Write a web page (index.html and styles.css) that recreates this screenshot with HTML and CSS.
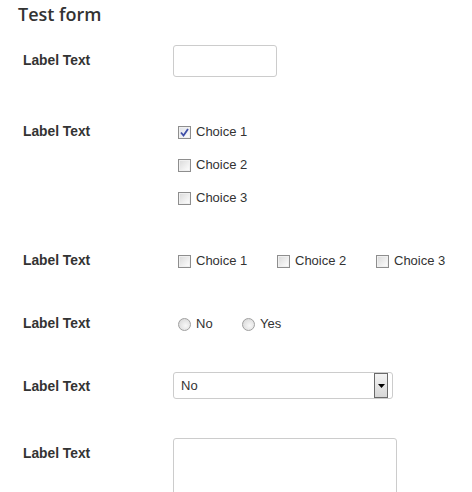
FILE: index.html
```html
<!DOCTYPE html>
<html>
<head>
<meta charset="utf-8">
<link rel="stylesheet" href="styles.css">
</head>
<body>
<h1 class="title">Test form</h1>
<div class="form">
  <div class="row row-input">
    <div class="label">Label Text</div>
    <div class="control"><div class="textbox"></div></div>
  </div>
  <div class="row row-checks">
    <div class="label">Label Text</div>
    <div class="control vlist">
      <div class="choice"><span class="cb checked"><svg width="9" height="9" viewBox="0 0 9 9"><path d="M1 4.5 L3.5 7.5 L8 1" fill="none" stroke="#3f4fa8" stroke-width="1.8"/></svg></span>Choice 1</div>
      <div class="choice"><span class="cb"></span>Choice 2</div>
      <div class="choice"><span class="cb"></span>Choice 3</div>
    </div>
  </div>
  <div class="row row-hchecks">
    <div class="label">Label Text</div>
    <div class="control hlist">
      <div class="choice hc"><span class="cb"></span>Choice 1</div>
      <div class="choice hc"><span class="cb"></span>Choice 2</div>
      <div class="choice hc"><span class="cb"></span>Choice 3</div>
    </div>
  </div>
  <div class="row row-radio">
    <div class="label">Label Text</div>
    <div class="control hlist">
      <div class="choice rc"><span class="rb"></span>No</div>
      <div class="choice rc"><span class="rb"></span>Yes</div>
    </div>
  </div>
  <div class="row row-select">
    <div class="label">Label Text</div>
    <div class="control">
      <div class="select"><span class="sel-text">No</span><span class="sel-btn"><svg width="7" height="4" viewBox="0 0 7 4"><path d="M0 0 H7 L3.5 4 Z" fill="#000"/></svg></span></div>
    </div>
  </div>
  <div class="row row-textarea">
    <div class="label">Label Text</div>
    <div class="control"><div class="textarea"></div></div>
  </div>
</div>
</body>
</html>
```
FILE: styles.css
```css
html, body {
  margin: 0;
  padding: 0;
  background: #fff;
  overflow: hidden;
}
body {
  font-family: "Liberation Sans", Arial, sans-serif;
  color: #333;
  width: 472px;
  height: 492px;
}
.title {
  margin: 2px 0 0 18px;
  font-family: "Open Sans", sans-serif;
  font-weight: 600;
  font-size: 18px;
  line-height: 24px;
  color: #333;
}
.form {
  padding-left: 23px;
  height: 466px;
  overflow: hidden;
}
.row {
  display: flex;
  align-items: flex-start;
}
.label {
  width: 150px;
  flex: none;
  font-weight: bold;
  font-size: 13.8px;
  line-height: 20px;
  color: #333;
}
.row-input { margin-top: 19px; }
.row-input .label { margin-top: 6px; }
.row-checks { margin-top: 45px; }
.row-hchecks { margin-top: 43px; }
.row-radio { margin-top: 43px; }
.row-select { margin-top: 38px; }
.row-select .label { margin-top: 5px; }
.row-textarea { margin-top: 39px; }
.row-textarea .label { margin-top: 6px; }

.textbox {
  width: 102px;
  height: 30px;
  border: 1px solid #ccc;
  border-radius: 3px;
}
.vlist {
  display: flex;
  flex-direction: column;
  gap: 13px;
}
.hlist {
  display: flex;
}
.choice {
  display: flex;
  align-items: center;
  font-size: 13px;
  line-height: 20px;
  height: 20px;
  color: #333;
  padding-left: 5px;
}
.hc { width: 94px; }
.rc { width: 59px; }
.cb {
  width: 11px;
  height: 11px;
  border: 1px solid #8e8e8e;
  background: linear-gradient(135deg, #d9d9d9 0%, #f4f4f4 70%, #fff 100%);
  box-shadow: inset 0 0 0 1px #f0f0f0;
  margin-right: 5px;
  display: flex;
  align-items: center;
  justify-content: center;
  flex: none;
}
.cb.checked {
  background: linear-gradient(135deg, #dde0e8 0%, #f4f5f8 70%, #fff 100%);
}
.rb {
  width: 11px;
  height: 11px;
  border-radius: 50%;
  border: 1px solid #a0a0a0;
  background: radial-gradient(circle at 60% 60%, #f8f8f8 0%, #e2e2e2 60%, #cfcfcf 100%);
  margin-right: 5px;
  flex: none;
}
.select {
  width: 218px;
  height: 25px;
  border: 1px solid #ccc;
  border-radius: 3px;
  display: flex;
  align-items: center;
  justify-content: space-between;
}
.sel-text {
  font-size: 13px;
  padding-left: 7px;
  color: #333;
}
.sel-btn {
  width: 12px;
  height: 23px;
  border: 1px solid #6a6a6a;
  background: linear-gradient(#f4f4f4, #d6d6d6);
  margin-right: 4px;
  display: flex;
  align-items: center;
  justify-content: center;
}
.textarea {
  width: 222px;
  height: 80px;
  border: 1px solid #ccc;
  border-radius: 3px;
}
```
